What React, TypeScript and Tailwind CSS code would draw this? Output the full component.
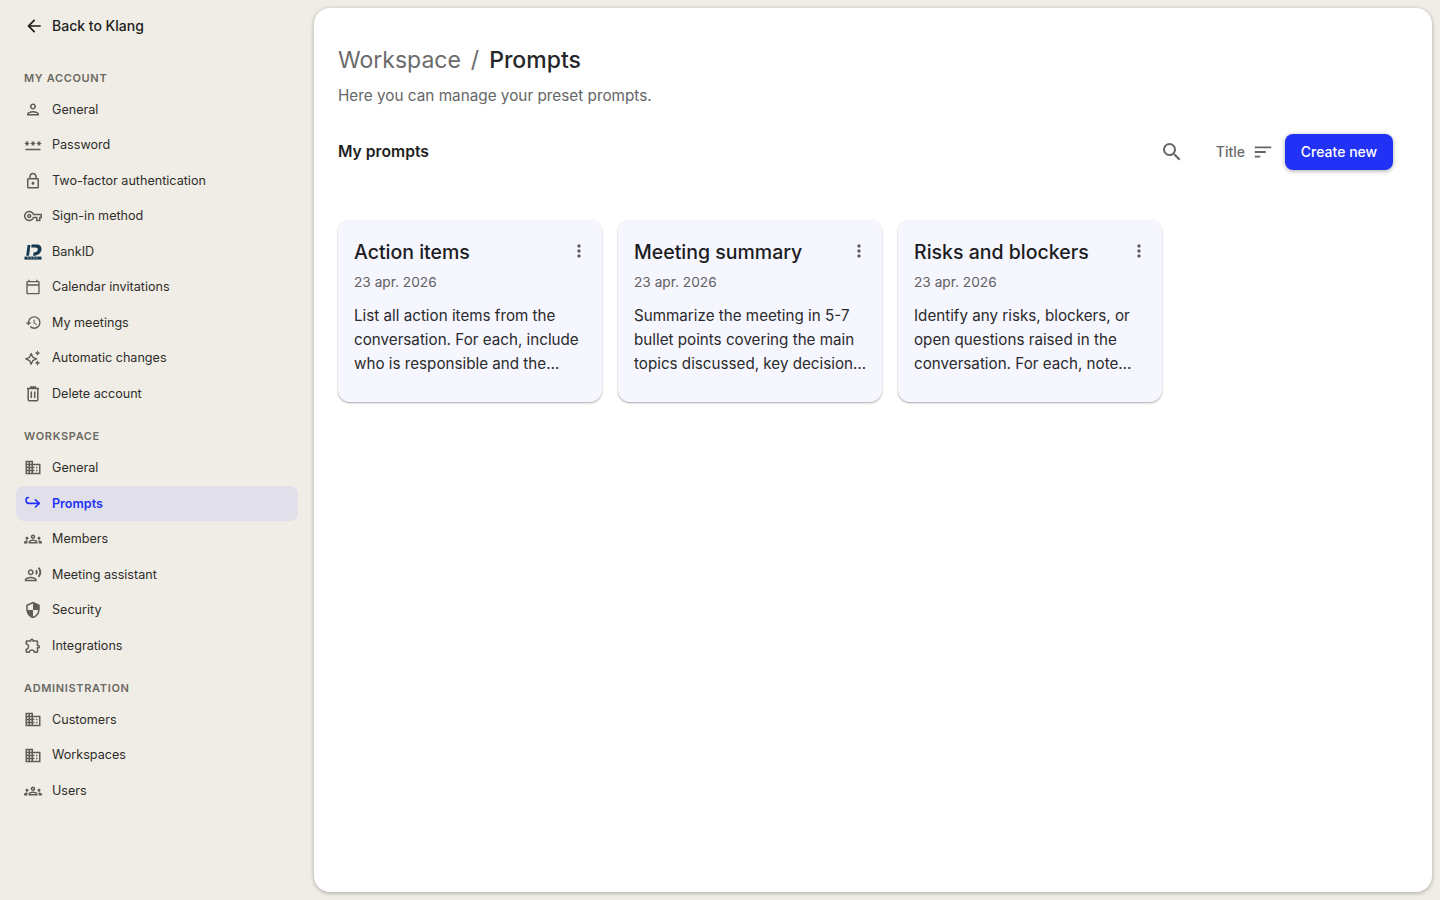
import type { ReactNode } from 'react';
import {
  MdArrowBack,
  MdDomain,
  MdHistory,
  MdMoreVert,
  MdOutlineCalendarToday,
  MdOutlineExtension,
  MdOutlineGroups,
  MdOutlineLock,
  MdOutlinePassword,
  MdOutlinePerson,
  MdOutlineRecordVoiceOver,
  MdOutlineVpnKey,
  MdSearch,
  MdSecurity,
  MdSort,
} from 'react-icons/md';

const SparkleIcon = () => (
  <svg viewBox="0 0 20 20" className="w-[20px] h-[20px]" fill="none" stroke="currentColor" strokeWidth="1.5">
    <path d="M8 5 9.8 9.2l4.2 1.8-4.2 1.8L8 17l-1.8-4.2L2 11l4.2-1.8z" strokeLinejoin="round" />
    <path d="M15 1.4l1 2.1 2.1 1-2.1 1-1 2.1-1-2.1-2.1-1 2.1-1zM15 12.4l1 2.1 2.1 1-2.1 1-1 2.1-1-2.1-2.1-1 2.1-1z" fill="currentColor" stroke="none" />
  </svg>
);

const BankIdIcon = () => (
  <svg viewBox="0 0 18 16" className="w-[18px] h-[16px]" fill="#17394f">
    <g transform="scale(1 1.12)">
      <path d="M3.6 1h2.8L5 10.4H2.2z" />
      <path d="M7.6 0.4h5C16.6 0.4 18 2.8 17.4 5.4 16.8 8.4 13.8 10.6 9 10.6l.6-3c2.4 0 3.9-.9 4.2-2.5.2-1.2-.8-1.9-2.8-1.9H7.2z" />
    </g>
    <rect x="0.5" y="12.6" width="17" height="3" />
    <path d="M3.5 13.6h1v1h-1zM6.5 13.6h1v1h-1zM9.5 13.6h1v1h-1zM12.5 13.6h1v1h-1z" fill="#f0ede6" />
  </svg>
);

const PromptIcon = () => (
  <svg viewBox="0 0 18 18" className="w-[18px] h-[18px]" fill="none" stroke="currentColor" strokeWidth="1.6">
    <path d="M4.5 3.5C2.6 3.5 2 4.6 2 6s.8 3.4 3 3.4h10" strokeLinecap="round" />
    <path d="M11.5 5.8 15.3 9.4l-3.8 3.6" strokeLinecap="round" strokeLinejoin="round" />
  </svg>
);

const TrashIcon = () => (
  <svg viewBox="0 0 18 18" className="w-[18px] h-[18px]" fill="none" stroke="currentColor" strokeWidth="1.5">
    <path d="M3 3.6h12M6.6 3.4V2h4.8v1.4" />
    <path d="M4.2 3.6v11.2c0 .6.4 1 1 1h7.6c.6 0 1-.4 1-1V3.6" />
    <path d="M7.3 6.4v6.6M10.7 6.4v6.6" />
  </svg>
);

type NavEntry = { label: string; icon: ReactNode; active?: boolean };

const account: NavEntry[] = [
  { label: 'General', icon: <MdOutlinePerson size={21} /> },
  { label: 'Password', icon: <MdOutlinePassword size={20} /> },
  { label: 'Two-factor authentication', icon: <MdOutlineLock size={20} /> },
  { label: 'Sign-in method', icon: <MdOutlineVpnKey size={20} /> },
  { label: 'BankID', icon: <BankIdIcon /> },
  { label: 'Calendar invitations', icon: <MdOutlineCalendarToday size={16} /> },
  { label: 'My meetings', icon: <MdHistory size={17} /> },
  { label: 'Automatic changes', icon: <SparkleIcon /> },
  { label: 'Delete account', icon: <TrashIcon /> },
];

const workspace: NavEntry[] = [
  { label: 'General', icon: <MdDomain size={19} /> },
  { label: 'Prompts', icon: <PromptIcon />, active: true },
  { label: 'Members', icon: <MdOutlineGroups size={20} /> },
  { label: 'Meeting assistant', icon: <MdOutlineRecordVoiceOver size={19} /> },
  { label: 'Security', icon: <MdSecurity size={18} /> },
  { label: 'Integrations', icon: <MdOutlineExtension size={19} /> },
];

const administration: NavEntry[] = [
  { label: 'Customers', icon: <MdDomain size={19} /> },
  { label: 'Workspaces', icon: <MdDomain size={19} /> },
  { label: 'Users', icon: <MdOutlineGroups size={20} /> },
];

const prompts = [
  {
    title: 'Action items',
    lines: ['List all action items from the', 'conversation. For each, include', 'who is responsible and the…'],
  },
  {
    title: 'Meeting summary',
    lines: ['Summarize the meeting in 5-7', 'bullet points covering the main', 'topics discussed, key decision…'],
  },
  {
    title: 'Risks and blockers',
    lines: ['Identify any risks, blockers, or', 'open questions raised in the', 'conversation. For each, note…'],
  },
];

const NavSection = ({ title, items }: { title: string; items: NavEntry[] }) => (
  <div className="mb-[14px]">
    <div className="h-[22px] pl-[24px] flex items-center text-[11px] font-semibold tracking-[0.06em] text-[#6b6962]">{title}</div>
    <div className="flex flex-col mt-[2.75px]">
      {items.map((item) => (
        <div
          key={item.label}
          className={`h-[35.5px] mx-[16px] px-[8px] rounded-[8px] flex items-center gap-[10px] text-[12.6px] ${
            item.active ? 'bg-[#e1dfe9] text-[#2233f5] font-semibold' : 'text-[#2e2d2a]'
          }`}
        >
          <span className={`w-[18px] flex justify-center shrink-0 ${item.active ? 'text-[#2233f5]' : 'text-[#5e5c57]'}`}>{item.icon}</span>
          <span className="mt-[1.5px]">{item.label}</span>
        </div>
      ))}
    </div>
  </div>
);

const PromptCard = ({ title, lines }: { title: string; lines: string[] }) => (
  <div className="w-[264px] h-[182px] rounded-[12px] bg-[#f6f6fe] pt-[20px] px-[16px] shadow-[0_1px_2px_rgba(0,0,0,0.35)]">
    <div className="flex items-center justify-between h-[24px]">
      <span className="mt-[2px] text-[19.5px] font-medium text-[#1c1c1e]">{title}</span>
      <span className="text-[#5e5e5e] mr-[-3px] mt-[-2px]">
        <MdMoreVert size={20} />
      </span>
    </div>
    <div className="mt-[8px] text-[13.7px] leading-[20px] text-[#5f5f63]">23 apr. 2026</div>
    <div className="mt-[12px] text-[15.2px] leading-[24px] text-[#2a2a2c]">
      {lines.map((line) => (
        <div key={line} className="whitespace-nowrap">
          {line}
        </div>
      ))}
    </div>
  </div>
);

export default function App() {
  return (
    <div className="h-screen flex bg-[#f0ede6] font-['Inter',sans-serif] overflow-hidden">
      <aside className="w-[314px] shrink-0">
        <div className="h-[52px] pl-[24px] flex items-center gap-[8px] text-[14px] font-medium text-[#1d1d1b]">
          <MdArrowBack size={20} />
          <span className="mb-[2px]">Back to Klang</span>
        </div>
        <div className="pt-[15px]">
          <NavSection title="MY ACCOUNT" items={account} />
          <NavSection title="WORKSPACE" items={workspace} />
          <NavSection title="ADMINISTRATION" items={administration} />
        </div>
      </aside>
      <main className="flex-1 mt-[8px] mb-[8px] mr-[8px] bg-white rounded-[16px] shadow-[0_1px_4px_rgba(0,0,0,0.3)] pl-[24px] pr-[39px] pt-[35px]">
        <div className="text-[23px] leading-[34px] flex gap-[10px]">
          <span className="text-[#6b6b6b]">Workspace</span>
          <span className="text-[#6b6b6b]">/</span>
          <span className="text-[#27272a] font-medium">Prompts</span>
        </div>
        <p className="mt-[8px] text-[15.3px] leading-[22px] text-[#666666]">Here you can manage your preset prompts.</p>
        <div className="mt-[27px] h-[36px] flex items-center">
          <span className="text-[15.7px] font-semibold text-[#1f1f1f]">My prompts</span>
          <div className="ml-auto flex items-center">
            <span className="text-[#666666]">
              <MdSearch size={24} />
            </span>
            <span className="ml-[32px] mb-[2px] text-[14px] font-medium text-[#6b6b6b]">Title</span>
            <span className="ml-[7px] text-[#666666]">
              <MdSort size={22} />
            </span>
            <button className="ml-[11px] w-[108px] h-[36px] pb-[2px] rounded-[8px] bg-[#2231f6] text-white text-[14px] font-medium shadow-[0_1px_4px_rgba(0,0,0,0.35)]">
              Create new
            </button>
          </div>
        </div>
        <div className="mt-[50px] flex gap-[16px]">
          {prompts.map((p) => (
            <PromptCard key={p.title} title={p.title} lines={p.lines} />
          ))}
        </div>
      </main>
    </div>
  );
}
